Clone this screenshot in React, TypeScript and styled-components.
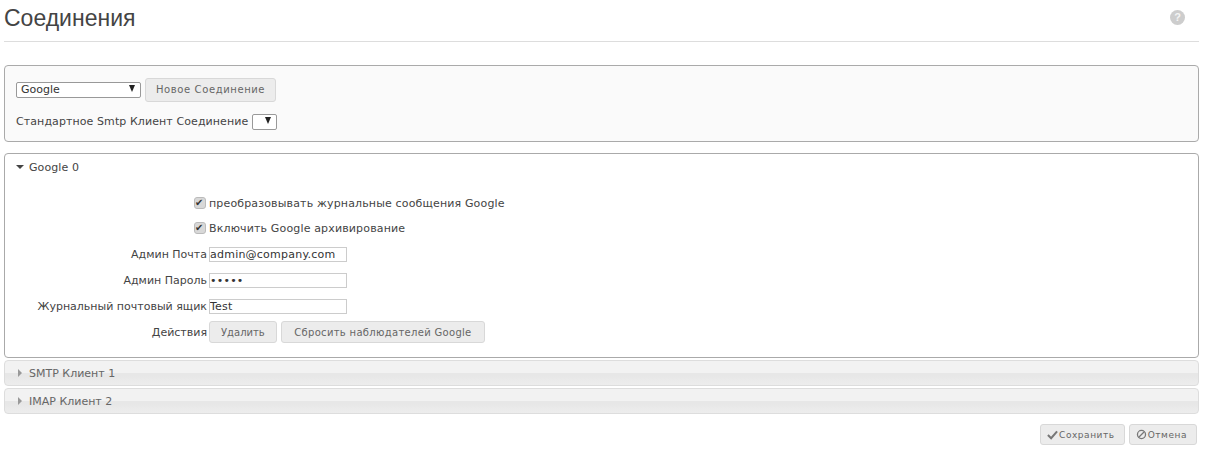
import { useState } from 'react'
import styled, { createGlobalStyle } from 'styled-components'

const Global = createGlobalStyle`
  html, body {
    margin: 0;
    padding: 0;
    background: #fff;
  }
  body {
    font-family: "DejaVu Sans", Verdana, sans-serif;
    font-size: 11px;
    color: #444;
  }
`

const Page = styled.div`
  width: 1207px;
  height: 461px;
  box-sizing: border-box;
  padding: 0 8px 0 4px;
  overflow: hidden;
`

const Header = styled.header`
  display: flex;
  justify-content: space-between;
  align-items: flex-start;
  height: 41px;
  border-bottom: 1px solid #ddd;
  margin-bottom: 23px;
`

const Title = styled.h1`
  margin: 4px 0 0;
  font: 400 23px/28px "Liberation Sans", Arial, sans-serif;
  color: #444;
`

const HelpIcon = styled.span`
  display: flex;
  align-items: center;
  justify-content: center;
  width: 15px;
  height: 15px;
  margin: 10px 14px 0 0;
  border-radius: 50%;
  background: #cdcdcd;
  color: #f4f4f4;
  font: 700 11px/15px "Liberation Sans", Arial, sans-serif;
`

const Panel = styled.section`
  box-sizing: border-box;
  height: 77px;
  padding: 11px 11px 0;
  margin-bottom: 11px;
  border: 1px solid #aaa;
  border-radius: 4px;
  background: #fafafa;
`

const Row = styled.div`
  display: flex;
  align-items: center;
  gap: 4px;
  height: 25px;
  margin-bottom: 7px;
`

const RowLabel = styled.span`
  letter-spacing: 0.09px;
`

const SelectWrap = styled.span<{ $width: number }>`
  position: relative;
  display: inline-block;
  width: ${(p) => p.$width}px;
  height: 16px;
`

const Select = styled.select`
  appearance: none;
  display: block;
  box-sizing: border-box;
  width: 100%;
  height: 100%;
  padding: 0 0 0 4px;
  border: 1px solid #999;
  border-radius: 2px;
  background: #fff;
  color: #333;
  font: 11px "DejaVu Sans", Verdana, sans-serif;
`

const SelectArrow = styled.span`
  position: absolute;
  top: 3px;
  right: 6px;
  width: 0;
  height: 0;
  border-left: 3.5px solid transparent;
  border-right: 3.5px solid transparent;
  border-top: 7px solid #222;
  pointer-events: none;
`

const Button = styled.button<{ $spacing?: number; $pad?: number }>`
  display: inline-flex;
  align-items: center;
  justify-content: center;
  gap: 1px;
  box-sizing: border-box;
  height: 22px;
  padding: 0 ${(p) => p.$pad ?? 10}px;
  border: 1px solid #d8d8d8;
  border-radius: 3px;
  background: #ececec;
  color: #666;
  font: 10px "DejaVu Sans", Verdana, sans-serif;
  letter-spacing: ${(p) => p.$spacing ?? 0.45}px;
  white-space: nowrap;
`

const NewButton = styled(Button)`
  height: 24px;
`

const Open = styled.section`
  box-sizing: border-box;
  height: 205px;
  margin-bottom: 2px;
  border: 1px solid #aaa;
  border-radius: 4px;
  background: #fff;
`

const AccordionHead = styled.div`
  display: flex;
  align-items: center;
  gap: 5px;
  height: 26px;
  padding-left: 11px;
  color: #444;
  letter-spacing: 0.1px;
`

const TriangleDown = styled.span`
  width: 0;
  height: 0;
  border-left: 4px solid transparent;
  border-right: 4px solid transparent;
  border-top: 4px solid #444;
`

const TriangleRight = styled.span`
  width: 0;
  height: 0;
  margin: 0 2px;
  border-top: 4px solid transparent;
  border-bottom: 4px solid transparent;
  border-left: 4px solid #999;
`

const Form = styled.div`
  display: grid;
  grid-template-columns: 202px 1fr;
  grid-template-rows: 24px repeat(5, 26px);
  column-gap: 2px;
  align-items: center;
  margin-top: 11px;
`

const Label = styled.label`
  text-align: right;
  color: #444;
  white-space: nowrap;
`

const CheckLine = styled.label`
  grid-column: 2;
  display: flex;
  align-items: center;
  gap: 3px;
  margin-left: -15px;
  color: #444;
  letter-spacing: 0.15px;
`

const Check = styled.input.attrs({ type: 'checkbox' })`
  appearance: none;
  position: relative;
  box-sizing: border-box;
  width: 12px;
  height: 12px;
  margin: 0;
  border: 1px solid #bbb;
  border-radius: 3px;
  background: #d8d8d8;

  &:checked::after {
    content: '✔';
    position: absolute;
    top: -2px;
    left: 0;
    font: 10px/13px "DejaVu Sans", sans-serif;
    color: #333;
  }
`

const Input = styled.input`
  box-sizing: border-box;
  width: 138px;
  height: 15px;
  padding: 0;
  border: 1px solid #ccc;
  background: #fff;
  color: #333;
  font: 11px "DejaVu Sans", Verdana, sans-serif;
  letter-spacing: 0.23px;
  outline: none;
`

const Actions = styled.div`
  display: flex;
  gap: 4px;
`

const Closed = styled.div`
  display: flex;
  align-items: center;
  gap: 5px;
  box-sizing: border-box;
  height: 26px;
  margin-bottom: 2px;
  padding-left: 11px;
  border: 1px solid #ddd;
  border-radius: 4px;
  background: linear-gradient(#f2f2f2 0 50%, #e7e7e7 50% 60%, #ededed 100%);
  color: #666;
`

const Footer = styled.div`
  display: flex;
  justify-content: flex-end;
  gap: 4px;
  margin-top: 10px;
  padding-right: 2px;
`

const FooterButton = styled(Button)`
  height: 21px;
  padding: 0 9px 0 6px;
  font-size: 9px;
  letter-spacing: 0.55px;
`

const BtnIcon = styled.svg`
  width: 11px;
  height: 11px;
  flex: none;
`

const connections = ['SMTP Клиент 1', 'IMAP Клиент 2']

export default function App() {
  const [convert, setConvert] = useState(true)
  const [archive, setArchive] = useState(true)

  return (
    <Page>
      <Global />
      <Header>
        <Title>Соединения</Title>
        <HelpIcon>?</HelpIcon>
      </Header>

      <Panel>
        <Row>
          <SelectWrap $width={125}>
            <Select defaultValue="Google">
              <option>Google</option>
            </Select>
            <SelectArrow />
          </SelectWrap>
          <NewButton $spacing={0.6}>Новое Соединение</NewButton>
        </Row>
        <Row>
          <RowLabel>Стандартное Smtp Клиент Соединение</RowLabel>
          <SelectWrap $width={25}>
            <Select defaultValue="">
              <option value=""></option>
            </Select>
            <SelectArrow />
          </SelectWrap>
        </Row>
      </Panel>

      <Open>
        <AccordionHead>
          <TriangleDown />
          Google 0
        </AccordionHead>
        <Form>
          <CheckLine>
            <Check checked={convert} onChange={() => setConvert(!convert)} />
            преобразовывать журнальные сообщения Google
          </CheckLine>
          <CheckLine>
            <Check checked={archive} onChange={() => setArchive(!archive)} />
            Включить Google архивирование
          </CheckLine>
          <Label>Админ Почта</Label>
          <Input defaultValue="admin@company.com" />
          <Label>Админ Пароль</Label>
          <Input type="password" defaultValue="12345" />
          <Label>Журнальный почтовый ящик</Label>
          <Input defaultValue="Test" />
          <Label>Действия</Label>
          <Actions>
            <Button $spacing={0} $pad={11}>Удалить</Button>
            <Button $spacing={0.31} $pad={12.5}>Сбросить наблюдателей Google</Button>
          </Actions>
        </Form>
      </Open>

      {connections.map((name) => (
        <Closed key={name}>
          <TriangleRight />
          {name}
        </Closed>
      ))}

      <Footer>
        <FooterButton>
          <BtnIcon viewBox="0 0 12 12">
            <path d="M1 6.5 L4.5 10 L11 2.5" fill="none" stroke="#777" strokeWidth="2.2" />
          </BtnIcon>
          Сохранить
        </FooterButton>
        <FooterButton>
          <BtnIcon viewBox="0 0 12 12">
            <circle cx="6" cy="6" r="4.4" fill="none" stroke="#777" strokeWidth="1.4" />
            <path d="M3 9 L9 3" stroke="#777" strokeWidth="1.4" />
          </BtnIcon>
          Отмена
        </FooterButton>
      </Footer>
    </Page>
  )
}
